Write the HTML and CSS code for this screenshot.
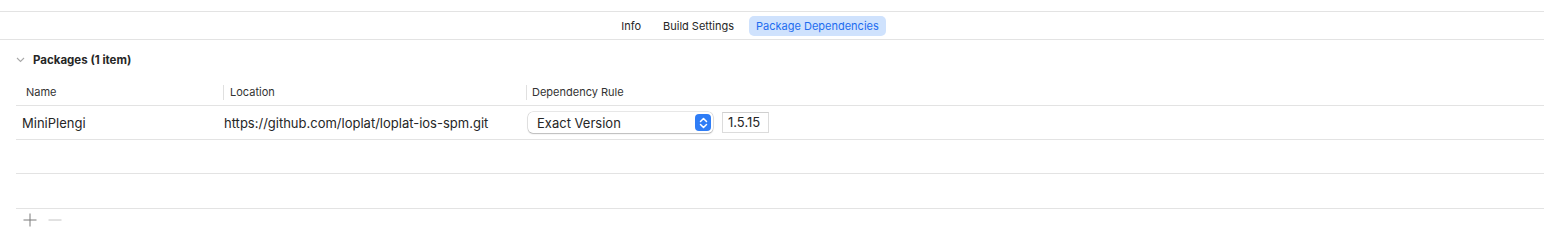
FILE: index.html
```html
<!DOCTYPE html>
<html>
<head>
<meta charset="utf-8">
<link rel="stylesheet" href="styles.css">
</head>
<body>
<div class="topgap"></div>
<nav class="tabbar">
  <span class="tab">Info</span>
  <span class="tab">Build Settings</span>
  <span class="tab active">Package Dependencies</span>
</nav>
<section class="section">
  <div class="section-head">
    <svg class="chev" width="9" height="6" viewBox="0 0 9 6"><path d="M1 1 L4.5 4.5 L8 1" fill="none" stroke="#a8a8a8" stroke-width="1.1"/></svg>
    <span class="section-title">Packages (1 item)</span>
  </div>
  <div class="table">
    <div class="thead">
      <div class="th c-name">Name</div>
      <div class="th c-loc">Location</div>
      <div class="th c-rule">Dependency Rule</div>
    </div>
    <div class="row">
      <div class="td c-name">MiniPlengi</div>
      <div class="td c-loc">https://github.com/loplat/loplat-ios-spm.git</div>
      <div class="td c-rule">
        <div class="popup">
          <span class="popup-label">Exact Version</span>
          <span class="stepper">
            <svg width="9" height="12" viewBox="0 0 9 12"><path d="M1.5 4.5 L4.5 1.5 L7.5 4.5 M1.5 7.5 L4.5 10.5 L7.5 7.5" fill="none" stroke="#fff" stroke-width="1.5" stroke-linecap="round" stroke-linejoin="round"/></svg>
          </span>
        </div>
        <div class="field">1.5.15</div>
      </div>
    </div>
    <div class="row empty"></div>
    <div class="row empty tall"></div>
    <div class="footer">
      <svg width="14" height="14" viewBox="0 0 14 14"><path d="M7 0.5 V13.5 M0.5 7 H13.5" stroke="#7a7a7a" stroke-width="1"/></svg>
      <svg width="14" height="14" viewBox="0 0 14 14"><path d="M0.5 7 H13.5" stroke="#c4c4c4" stroke-width="1"/></svg>
    </div>
  </div>
</section>
</body>
</html>
```

FILE: styles.css
```css
* { box-sizing: border-box; }
html, body {
  margin: 0;
  padding: 0;
  background: #fff;
  font-family: Inter, "Liberation Sans", sans-serif;
  color: #262626;
}
.topgap { height: 11px; }
.tabbar {
  height: 29px;
  border-top: 1px solid #e3e3e3;
  border-bottom: 1px solid #e3e3e3;
  display: flex;
  justify-content: center;
  align-items: center;
  gap: 8px;
  padding-right: 44px;
}
.tab {
  font-size: 11px;
  padding: 3px 7px;
  border-radius: 5px;
  color: #262626;
  line-height: 14px;
}
.tab.active {
  background: #cfe2fd;
  color: #1d6cf0;
}
.section-head {
  height: 38px;
  display: flex;
  align-items: center;
  padding-left: 16px;
  padding-top: 2px;
  gap: 8px;
}
.section-title {
  font-size: 11.5px;
  font-weight: 700;
  color: #262626;
}
.table {
  margin-left: 16px;
}
.thead {
  display: flex;
  height: 28px;
  align-items: center;
  padding-top: 2px;
  border-bottom: 1px solid #e3e3e3;
}
.th {
  font-size: 11px;
  color: #333;
  height: 15px;
  line-height: 15px;
}
.c-name { width: 207px; padding-left: 10px; }
.c-loc { width: 303px; padding-left: 6px; border-left: 1px solid #e0e0e0; }
.c-rule { padding-left: 5px; border-left: 1px solid #e0e0e0; flex: 1; }
.row {
  display: flex;
  height: 34px;
  align-items: center;
  border-bottom: 1px solid #e3e3e3;
}
.row.tall { height: 35px; }
.td {
  font-size: 13px;
  color: #262626;
}
.td.c-name { padding-left: 6px; }
.td.c-loc { padding-left: 0; border-left: none; margin-left: 1px; width: 303px; }
.td.c-rule { border-left: none; display: flex; align-items: center; gap: 9px; padding-left: 1px; margin-left: 0; }
.popup {
  width: 185px;
  height: 21px;
  border-radius: 5px;
  background: #fff;
  box-shadow: 0 0 0 0.5px rgba(0,0,0,0.18), 0 1px 1.5px rgba(0,0,0,0.2);
  display: flex;
  align-items: center;
  justify-content: space-between;
  padding-left: 9px;
  padding-right: 2px;
}
.popup-label { font-size: 13px; color: #262626; }
.stepper {
  width: 16px;
  height: 17px;
  border-radius: 4px;
  background: #2f7df6;
  display: flex;
  align-items: center;
  justify-content: center;
}
.field {
  width: 47px;
  height: 21px;
  border: 1px solid #dcdcdc;
  border-top-color: #cfcfcf;
  font-size: 13px;
  line-height: 19px;
  padding-left: 5px;
  color: #262626;
}
.footer {
  display: flex;
  gap: 11px;
  padding-left: 7px;
  padding-top: 4px;
}
```
